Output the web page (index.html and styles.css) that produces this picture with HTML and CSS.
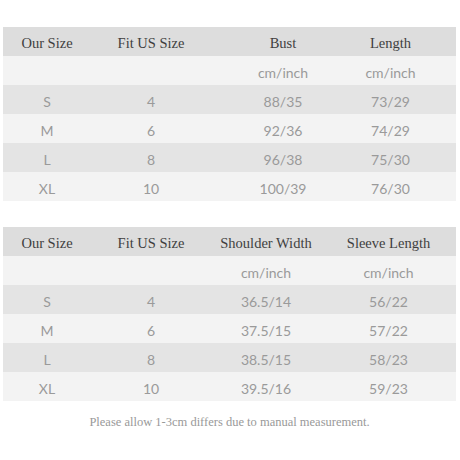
FILE: index.html
```html
<!DOCTYPE html>
<html>
<head>
<meta charset="utf-8">
<link rel="stylesheet" href="styles.css">
</head>
<body>
<div class="page">
  <div class="chart chart-a">
    <div class="row head"><span>Our Size</span><span>Fit US Size</span><span>Bust</span><span>Length</span></div>
    <div class="row unit"><span></span><span></span><span>cm/inch</span><span>cm/inch</span></div>
    <div class="row dark"><span>S</span><span>4</span><span>88/35</span><span>73/29</span></div>
    <div class="row light"><span>M</span><span>6</span><span>92/36</span><span>74/29</span></div>
    <div class="row dark"><span>L</span><span>8</span><span>96/38</span><span>75/30</span></div>
    <div class="row light"><span>XL</span><span>10</span><span>100/39</span><span>76/30</span></div>
  </div>
  <div class="chart chart-b">
    <div class="row head"><span>Our Size</span><span>Fit US Size</span><span>Shoulder Width</span><span>Sleeve Length</span></div>
    <div class="row unit"><span></span><span></span><span>cm/inch</span><span>cm/inch</span></div>
    <div class="row dark"><span>S</span><span>4</span><span>36.5/14</span><span>56/22</span></div>
    <div class="row light"><span>M</span><span>6</span><span>37.5/15</span><span>57/22</span></div>
    <div class="row dark"><span>L</span><span>8</span><span>38.5/15</span><span>58/23</span></div>
    <div class="row light"><span>XL</span><span>10</span><span>39.5/16</span><span>59/23</span></div>
  </div>
  <p class="note">Please allow 1-3cm differs due to manual measurement.</p>
</div>
</body>
</html>
```
FILE: styles.css
```css
html, body {
  margin: 0;
  padding: 0;
  background: #ffffff;
}
.page {
  width: 460px;
  height: 460px;
  padding: 27px 4px 0 3px;
  box-sizing: border-box;
  display: flex;
  flex-direction: column;
}
.chart {
  display: flex;
  flex-direction: column;
}
.chart-b {
  margin-top: 26px;
}
.row {
  display: grid;
  height: 29px;
  box-sizing: border-box;
  padding-top: 4px;
  align-items: center;
  text-align: center;
}
.chart-a .row {
  grid-template-columns: 88px 120px 144px 101px;
}
.chart-a .row span:nth-child(4) {
  padding-right: 30px;
}
.chart-b .row {
  grid-template-columns: 88px 120px 110px 135px;
}
.head {
  background: #dddddd;
  font-family: "Liberation Serif", serif;
  font-size: 14.5px;
  color: #3f3f3f;
  font-weight: normal;
}
.unit, .dark, .light {
  font-family: Lato, "DejaVu Sans", sans-serif;
  font-size: 14px;
  color: #9a9a9a;
}
.unit { background: #f3f3f3; }
.dark { background: #e4e4e4; }
.light { background: #f3f3f3; }
.note {
  margin: 14px 0 0 0;
  text-align: center;
  font-family: "Liberation Serif", serif;
  font-size: 12.5px;
  color: #999999;
}
```
